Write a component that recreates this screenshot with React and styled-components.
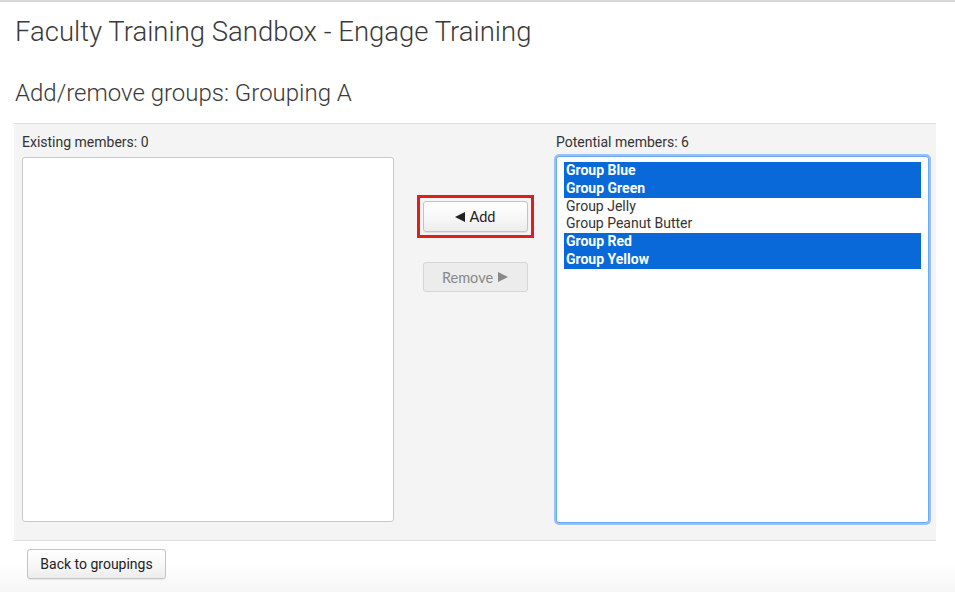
import React from "react";
import styled, { createGlobalStyle } from "styled-components";

const Global = createGlobalStyle`
  html, body { margin: 0; padding: 0; height: 100%; }
  body {
    font-family: Roboto, "Noto Sans", sans-serif;
    color: #333;
    background: #fff;
  }
  #root { min-height: 100%; }
`;

const Page = styled.div`
  min-height: 592px;
  box-sizing: border-box;
  border-top: 2px solid #d6d6d6;
  padding: 0 19px 0 14px;
  background: linear-gradient(to bottom, #fff 0, #fff 560px, #f6f6f6 592px);
`;

const Title = styled.h1`
  margin: 0;
  padding: 14px 0 0 1px;
  font-size: 27.5px;
  font-weight: 300;
  line-height: 32px;
  color: #3a3a3a;
`;

const SubTitle = styled.h2`
  margin: 0;
  padding: 30px 0 0 1px;
  font-size: 24px;
  font-weight: 300;
  line-height: 30px;
  color: #3a3a3a;
`;

const Panel = styled.div`
  margin-top: 15px;
  background: #f4f4f4;
  border-top: 1px solid #dcdcdc;
  border-bottom: 1px solid #dcdcdc;
  padding: 10px 7px 17px 8px;
  display: grid;
  grid-template-columns: 372px 1fr 373px;
`;

const Column = styled.div`
  display: flex;
  flex-direction: column;
`;

const Label = styled.div`
  font-size: 14px;
  line-height: 16px;
  color: #333;
  margin-bottom: ${(p) => (p.$right ? "6px" : "7px")};
`;

const ListBox = styled.div`
  box-sizing: border-box;
  height: ${(p) => (p.$focused ? "367px" : "365px")};
  background: #fff;
  border-radius: 3px;
  border: 1px solid ${(p) => (p.$focused ? "#6aa8f2" : "#c8c8c8")};
  box-shadow: ${(p) =>
    p.$focused ? "0 0 0 2px rgba(120, 176, 245, 0.75)" : "none"};
  padding: 5px 7px;
  overflow: hidden;
`;

const Option = styled.div`
  font-size: 14px;
  line-height: 17.8px;
  padding: 0 2px;
  color: ${(p) => (p.$selected ? "#fff" : "#333")};
  background: ${(p) => (p.$selected ? "#0a69d9" : "transparent")};
  font-weight: ${(p) => (p.$selected ? 700 : 400)};
`;

const Middle = styled.div`
  display: flex;
  flex-direction: column;
  align-items: center;
  padding-top: 61px;
  gap: 24px;
`;

const Callout = styled.span`
  display: inline-flex;
  border: 3px solid #e21b1b;
  padding: 3px;
`;

const Button = styled.button`
  box-sizing: border-box;
  width: ${(p) => p.$w || "105px"};
  height: ${(p) => p.$h || "31px"};
  font-family: Lato, "Liberation Sans", sans-serif;
  font-size: 14.5px;
  color: ${(p) => (p.disabled ? "#888" : "#222")};
  border: 1px solid ${(p) => (p.disabled ? "#d6d6d6" : "#c4c4c4")};
  border-radius: 3px;
  background: ${(p) =>
    p.disabled
      ? "#ececec"
      : "linear-gradient(to bottom, #fff 0%, #f6f6f6 60%, #ececec 100%)"};
  box-shadow: ${(p) => (p.disabled ? "none" : "0 1px 1px rgba(0,0,0,0.08)")};
  display: flex;
  align-items: center;
  justify-content: center;
  gap: 5px;
  padding: 0;
  cursor: pointer;
`;

const Arrow = styled.span`
  display: inline-block;
  width: 0;
  height: 0;
  border-top: 5.5px solid transparent;
  border-bottom: 5.5px solid transparent;
  ${(p) =>
    p.$dir === "left"
      ? `border-right: 10px solid ${p.$color};`
      : `border-left: 10px solid ${p.$color};`}
`;

const Footer = styled.div`
  padding: 8px 0 0 13px;
`;

const BackButton = styled(Button)`
  font-family: Roboto, "Noto Sans", sans-serif;
  font-size: 14px;
  color: #222;
`;

const potential = [
  { name: "Group Blue", selected: true },
  { name: "Group Green", selected: true },
  { name: "Group Jelly", selected: false },
  { name: "Group Peanut Butter", selected: false },
  { name: "Group Red", selected: true },
  { name: "Group Yellow", selected: true },
];

export default function App() {
  return (
    <>
      <Global />
      <Page>
        <Title>Faculty Training Sandbox - Engage Training</Title>
        <SubTitle>Add/remove groups: Grouping A</SubTitle>
        <Panel>
          <Column>
            <Label>Existing members: 0</Label>
            <ListBox />
          </Column>
          <Middle>
            <Callout>
              <Button>
                <Arrow $dir="left" $color="#222" />
                Add
              </Button>
            </Callout>
            <Button disabled $h="30px">
              Remove
              <Arrow $dir="right" $color="#888" />
            </Button>
          </Middle>
          <Column>
            <Label $right>Potential members: 6</Label>
            <ListBox $focused>
              {potential.map((o) => (
                <Option key={o.name} $selected={o.selected}>
                  {o.name}
                </Option>
              ))}
            </ListBox>
          </Column>
        </Panel>
        <Footer>
          <BackButton $w="139px" $h="30px">
            Back to groupings
          </BackButton>
        </Footer>
      </Page>
    </>
  );
}
